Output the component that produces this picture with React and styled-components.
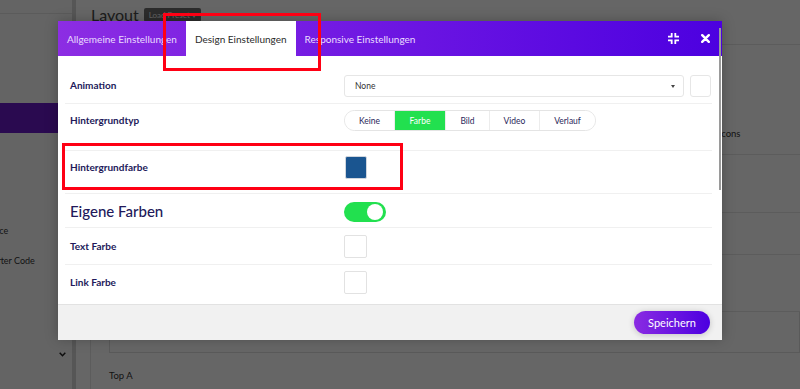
import React from "react";
import styled, { createGlobalStyle } from "styled-components";

const Global = createGlobalStyle`
  html, body { margin: 0; padding: 0; }
  body {
    width: 800px;
    height: 389px;
    overflow: hidden;
    background: #fff;
    font-family: Lato, "Noto Sans", Arial, sans-serif;
  }
`;

/* ---------- background page ---------- */
const Page = styled.div`
  position: relative;
  display: flex;
  width: 800px;
  height: 389px;
  overflow: hidden;
`;

const Sidebar = styled.aside`
  width: 72px;
  flex: none;
  display: flex;
  flex-direction: column;
  background: #fbfbfb;
  border-right: 4px solid #d8d8d8;
  overflow: hidden;
`;

const SidebarTop = styled.div`
  height: 13px;
  border-bottom: 1px solid #e4e4e4;
`;

const SideActive = styled.div`
  height: 30px;
  margin-top: 89px;
  background: #6a1bc9;
`;

const SideItem = styled.div`
  margin-top: ${(p) => p.$mt}px;
  margin-left: -15px;
  font-size: 9px;
  line-height: 11px;
  color: #333;
  white-space: nowrap;
`;

const SideChevron = styled.div`
  margin-top: auto;
  margin-bottom: 32px;
  align-self: flex-end;
  margin-right: 6px;
  display: flex;
`;

const Main = styled.main`
  flex: 1;
  display: flex;
  flex-direction: column;
  padding-left: 14px;
`;

const TitleRow = styled.div`
  display: flex;
  align-items: center;
  gap: 5px;
  height: 32px;
  padding-left: 1px;
  margin-top: -1px;
`;

const Title = styled.h1`
  margin: 0;
  font-size: 16px;
  line-height: 20px;
  font-weight: 400;
  color: #4a4a4a;
`;

const PresetBadge = styled.span`
  display: inline-flex;
  align-items: center;
  height: 14px;
  margin-top: -1px;
  background: #6e6e6e;
  color: #f2f2f2;
  font-size: 8px;
  padding: 0 5px;
  border-radius: 2px;
`;

const Panel = styled.section`
  flex: 1;
  display: flex;
  flex-direction: column;
  border-top: 1px solid #e6e6e6;
  border-left: 1px solid #e6e6e6;
  margin-top: 13px;
`;

const PanelRow = styled.div`
  height: ${(p) => p.$h}px;
  flex: none;
  box-sizing: border-box;
  border-bottom: 1px solid #e6e6e6;
  padding: 0 0 14px 600px;
  display: flex;
  flex-direction: column;
  justify-content: flex-end;
  gap: 17px;
`;

const PanelText = styled.span`
  margin-left: ${(p) => p.$x}px;
  font-size: ${(p) => p.$size}px;
  line-height: 12px;
  color: ${(p) => p.$color};
  white-space: nowrap;
`;

const InputBox = styled.div`
  height: 40px;
  margin: 0 0 0 18px;
  border: 1px solid #e2e2e2;
  border-top: none;
`;

const TopLabel = styled.div`
  margin: 17px 0 0 18px;
  font-size: 9.5px;
  color: #333;
`;

const Backdrop = styled.div`
  position: absolute;
  inset: 0;
  background: rgba(0, 0, 0, 0.6);
`;

/* ---------- modal ---------- */
const Modal = styled.div`
  position: absolute;
  left: 58px;
  top: 21px;
  width: 664px;
  height: 318px;
  display: flex;
  flex-direction: column;
  background: #fff;
  box-shadow: 0 0 12px rgba(0, 0, 0, 0.25);
`;

const ModalHeader = styled.header`
  height: 35px;
  flex: none;
  display: flex;
  align-items: stretch;
  background: linear-gradient(90deg, #8c2de3 0%, #6a14e2 55%, #4c00e0 100%);
`;

const Tab = styled.div`
  display: flex;
  align-items: center;
  padding: 0 9px;
  font-size: 10px;
  color: ${(p) => (p.$active ? "#2b2b2b" : "#eadcff")};
  background: ${(p) => (p.$active ? "#fff" : "transparent")};
  white-space: nowrap;
`;

const HeaderActions = styled.div`
  margin-left: auto;
  display: flex;
  align-items: center;
  gap: 22px;
  padding-right: 12px;
`;

const IconButton = styled.span`
  display: flex;
  align-items: center;
  justify-content: center;
`;

const ModalBody = styled.div`
  flex: 1;
  padding: 13px 10px 0 7px;
`;

const Row = styled.div`
  display: grid;
  grid-template-columns: 274px 1fr;
  align-items: center;
  padding: ${(p) => p.$pt}px 5px ${(p) => p.$pb}px;
  border-bottom: ${(p) => (p.$last ? "none" : "1px solid #f0f0f0")};
`;

const Label = styled.div`
  padding-bottom: 2px;
  font-size: ${(p) => (p.$big ? "15px" : "10px")};
  font-weight: ${(p) => (p.$big ? 500 : 700)};
  color: #22195a;
`;

const SelectWrap = styled.div`
  display: flex;
  gap: 6px;
`;

const Select = styled.div`
  width: 340px;
  height: 22px;
  box-sizing: border-box;
  border: 1px solid #e6e6e6;
  border-radius: 3px;
  display: flex;
  align-items: center;
  justify-content: space-between;
  padding: 0 8px 0 10px;
  font-size: 8.5px;
  color: #333;
`;

const Caret = styled.span`
  width: 0;
  height: 0;
  border-left: 2.5px solid transparent;
  border-right: 2.5px solid transparent;
  border-top: 3px solid #444;
`;

const SmallBox = styled.div`
  width: 21px;
  height: 22px;
  box-sizing: border-box;
  border: 1px solid #e6e6e6;
  border-radius: 3px;
`;

const Segmented = styled.div`
  display: inline-flex;
  justify-self: start;
  height: 21px;
  box-sizing: border-box;
  border: 1px solid #e4e4e4;
  border-radius: 11px;
  overflow: hidden;
`;

const Segment = styled.div`
  display: flex;
  align-items: center;
  justify-content: center;
  width: ${(p) => p.$w}px;
  font-size: 8.5px;
  color: ${(p) => (p.$active ? "#fff" : "#2a1f5a")};
  background: ${(p) => (p.$active ? "#22e04f" : "#fff")};
  border-left: ${(p) => (p.$first ? "none" : "1px solid #ececec")};
  box-sizing: border-box;
`;

const Swatch = styled.div`
  width: ${(p) => (p.$color ? 22 : 23)}px;
  height: 23px;
  box-sizing: border-box;
  margin-left: ${(p) => (p.$color ? 1 : 0)}px;
  border-radius: 2px;
  background: ${(p) => p.$color || "#fff"};
  border: 1px solid ${(p) => (p.$color ? "#d0d6de" : "#e2e2e2")};
`;

const Toggle = styled.div`
  width: 42px;
  height: 20px;
  border-radius: 10px;
  background: #22e04f;
  display: flex;
  align-items: center;
  justify-content: flex-end;
  padding: 0 3px;
  box-sizing: border-box;
`;

const Knob = styled.div`
  width: 16px;
  height: 16px;
  border-radius: 50%;
  background: #fff;
`;

const Footer = styled.footer`
  height: 35px;
  flex: none;
  border-top: 1px solid #e2e2e2;
  background: #f1f1f1;
  display: flex;
  align-items: center;
  justify-content: flex-end;
  padding-right: 12px;
`;

const SaveButton = styled.button`
  width: 76px;
  height: 23px;
  border: none;
  border-radius: 12px;
  background: linear-gradient(90deg, #8a2be2, #4c00e0);
  color: #fff;
  font-family: inherit;
  font-size: 11px;
  box-shadow: 0 1px 6px rgba(0, 0, 0, 0.2);
  padding: 0;
`;

const Scrollbar = styled.div`
  position: absolute;
  right: 1px;
  top: 7px;
  width: 2px;
  height: 162px;
  background: #9a9a9a;
`;

const Highlight = styled.div`
  position: absolute;
  box-sizing: border-box;
  border: 3px solid #ff0014;
  pointer-events: none;
`;

const Minimize = () => (
  <svg width="11" height="11" viewBox="0 0 11 11" fill="none" stroke="#fff" strokeWidth="1.8">
    <path d="M3.7 0V3.7H0" />
    <path d="M7.3 0V3.7H11" />
    <path d="M0 7.3H3.7V11" />
    <path d="M11 7.3H7.3V11" />
  </svg>
);

const Close = () => (
  <svg width="9" height="9" viewBox="0 0 9 9" stroke="#fff" strokeWidth="2.4" strokeLinecap="round">
    <path d="M1.2 1.2L7.8 7.8M7.8 1.2L1.2 7.8" />
  </svg>
);

const Chevron = () => (
  <svg width="7" height="5" viewBox="0 0 7 5" fill="none" stroke="#222" strokeWidth="1.5">
    <path d="M0.7 0.8L3.5 3.7L6.3 0.8" />
  </svg>
);

const segments = [
  { t: "Keine", w: 49 },
  { t: "Farbe", w: 51, active: true },
  { t: "Bild", w: 44 },
  { t: "Video", w: 50 },
  { t: "Verlauf", w: 56 },
];

export default function App() {
  return (
    <>
      <Global />
      <Page>
        <Sidebar>
          <SidebarTop />
          <SideActive />
          <SideItem $mt={92}>Space</SideItem>
          <SideItem $mt={19}>Starter Code</SideItem>
          <SideChevron>
            <Chevron />
          </SideChevron>
        </Sidebar>
        <Main>
          <TitleRow>
            <Title>Layout</Title>
            <PresetBadge>Load Preset ▾</PresetBadge>
          </TitleRow>
          <Panel>
            <PanelRow $h={110}>
              <PanelText $x={-12} $size={8} $color="#aaa">
                Farbschema
              </PanelText>
              <PanelText $x={1} $size={9.5} $color="#333">
                Social Icons
              </PanelText>
            </PanelRow>
            <PanelRow $h={58} />
            <PanelRow $h={42} />
            <PanelRow $h={57} />
            <InputBox />
            <TopLabel>Top A</TopLabel>
          </Panel>
        </Main>

        <Backdrop />

        <Modal>
          <ModalHeader>
            <Tab>Allgemeine Einstellungen</Tab>
            <Tab $active>Design Einstellungen</Tab>
            <Tab>Responsive Einstellungen</Tab>
            <HeaderActions>
              <IconButton>
                <Minimize />
              </IconButton>
              <IconButton>
                <Close />
              </IconButton>
            </HeaderActions>
          </ModalHeader>
          <ModalBody>
            <Row $pt={6} $pb={6}>
              <Label>Animation</Label>
              <SelectWrap>
                <Select>
                  None
                  <Caret />
                </Select>
                <SmallBox />
              </SelectWrap>
            </Row>
            <Row $pt={6} $pb={19}>
              <Label>Hintergrundtyp</Label>
              <Segmented>
                {segments.map((s, i) => (
                  <Segment key={s.t} $w={s.w} $active={s.active} $first={i === 0}>
                    {s.t}
                  </Segment>
                ))}
              </Segmented>
            </Row>
            <Row $pt={5} $pb={14}>
              <Label>Hintergrundfarbe</Label>
              <Swatch $color="#1a5590" />
            </Row>
            <Row $pt={8} $pb={5}>
              <Label $big>Eigene Farben</Label>
              <Toggle>
                <Knob />
              </Toggle>
            </Row>
            <Row $pt={7} $pb={6}>
              <Label>Text Farbe</Label>
              <Swatch />
            </Row>
            <Row $pt={6} $pb={10} $last>
              <Label>Link Farbe</Label>
              <Swatch />
            </Row>
          </ModalBody>
          <Footer>
            <SaveButton>Speichern</SaveButton>
          </Footer>
          <Scrollbar />
        </Modal>

        <Highlight style={{ left: 163, top: 13, width: 158, height: 58 }} />
        <Highlight style={{ left: 62, top: 143, width: 341, height: 47 }} />
      </Page>
    </>
  );
}
